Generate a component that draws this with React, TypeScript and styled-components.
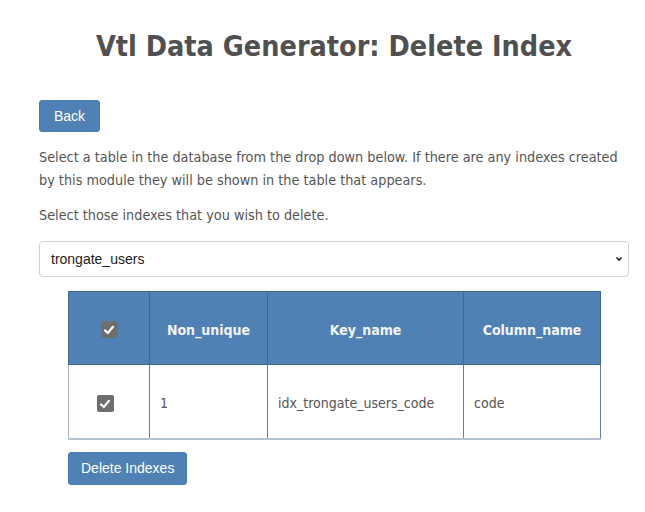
import React from "react";
import styled, { createGlobalStyle } from "styled-components";

const GlobalStyle = createGlobalStyle`
  html, body { margin: 0; padding: 0; background: #ffffff; }
  body { font-family: "DejaVu Sans Condensed", "DejaVu Sans", sans-serif; color: #555555; }
  * { box-sizing: border-box; }
`;

const Page = styled.div`
  width: 590px;
  margin-left: 39px;
  padding-top: 28px;
`;

const Title = styled.h1`
  margin: 0 0 34px;
  text-align: center;
  font-family: "DejaVu Sans Condensed", "DejaVu Sans", sans-serif;
  font-weight: bold;
  font-size: 28.5px;
  line-height: 38px;
  color: #505050;
`;

const Button = styled.button<{ $h?: number; $px?: number }>`
  display: inline-flex;
  align-items: center;
  justify-content: center;
  height: ${(p) => p.$h ?? 32}px;
  padding: 0 ${(p) => p.$px ?? 14}px;
  border: 1px solid #4a7cb0;
  border-radius: 3px;
  background: #4f81b5;
  color: #ffffff;
  font-family: "Liberation Sans", Arial, sans-serif;
  font-size: 14px;
  cursor: pointer;
`;

const Text = styled.p`
  margin: 0;
  font-size: 14.3px;
  line-height: 23px;
  color: #555555;
`;

const Intro = styled(Text)`
  margin-top: 14px;
`;

const Instruction = styled(Text)`
  margin-top: 12px;
`;

const SelectBox = styled.div`
  margin-top: 14px;
  height: 36px;
  border: 1px solid #d0d0d0;
  border-radius: 4px;
  display: flex;
  align-items: center;
  justify-content: space-between;
  padding: 0 5px 0 11px;
  font-family: "Liberation Sans", Arial, sans-serif;
  font-size: 14px;
  color: #222222;
`;

const TableWrap = styled.div`
  width: 532px;
  margin: 14px auto 0;
`;

const Table = styled.table`
  width: 100%;
  border-collapse: collapse;
  table-layout: fixed;
  font-size: 14px;
`;

const Th = styled.th`
  height: 73px;
  padding: 3px 8px 0;
  background: #4f81b5;
  color: #f4f4f4;
  font-weight: bold;
  text-align: center;
  border: 1px solid #3d6891;
`;

const Td = styled.td<{ $center?: boolean }>`
  height: 74px;
  padding: ${(p) => (p.$center ? "4px 14px 0 6px" : "4px 10px 0")};
  border-left: 1px solid ${(p) => (p.$center ? "#a9b6c6" : "#6a7f96")};
  border-right: 1px solid #6a7f96;
  border-bottom: 2px solid #b5c2d0;
  text-align: ${(p) => (p.$center ? "center" : "left")};
  color: #555555;
`;

const Check = styled.span`
  display: inline-flex;
  align-items: center;
  justify-content: center;
  width: 17px;
  height: 17px;
  border-radius: 2px;
  background: #6e6e6e;
  vertical-align: middle;
`;

const Footer = styled.div`
  width: 532px;
  margin: 12px auto 0;
`;

const CheckMark = () => (
  <Check>
    <svg width="12" height="12" viewBox="0 0 12 12">
      <path d="M2 6.4 L4.8 9 L10 2.8" fill="none" stroke="#ffffff" strokeWidth="2.2" strokeLinecap="round" strokeLinejoin="round" />
    </svg>
  </Check>
);

const Chevron = () => (
  <svg width="8" height="8" viewBox="0 0 8 8">
    <path d="M1.5 2.5 L4 5 L6.5 2.5" fill="none" stroke="#222" strokeWidth="1.6" />
  </svg>
);

export default function App() {
  return (
    <>
      <GlobalStyle />
      <Page>
        <Title>Vtl Data Generator: Delete Index</Title>
        <Button>Back</Button>
        <Intro>
          Select a table in the database from the drop down below. If there are any indexes created
          by this module they will be shown in the table that appears.
        </Intro>
        <Instruction>Select those indexes that you wish to delete.</Instruction>
        <SelectBox>
          <span>trongate_users</span>
          <Chevron />
        </SelectBox>
        <TableWrap>
          <Table>
            <colgroup>
              <col style={{ width: 81 }} />
              <col style={{ width: 118 }} />
              <col style={{ width: 196 }} />
              <col style={{ width: 137 }} />
            </colgroup>
            <thead>
              <tr>
                <Th><CheckMark /></Th>
                <Th>Non_unique</Th>
                <Th>Key_name</Th>
                <Th>Column_name</Th>
              </tr>
            </thead>
            <tbody>
              <tr>
                <Td $center><CheckMark /></Td>
                <Td>1</Td>
                <Td>idx_trongate_users_code</Td>
                <Td>code</Td>
              </tr>
            </tbody>
          </Table>
        </TableWrap>
        <Footer>
          <Button $h={33} $px={12}>Delete Indexes</Button>
        </Footer>
      </Page>
    </>
  );
}
